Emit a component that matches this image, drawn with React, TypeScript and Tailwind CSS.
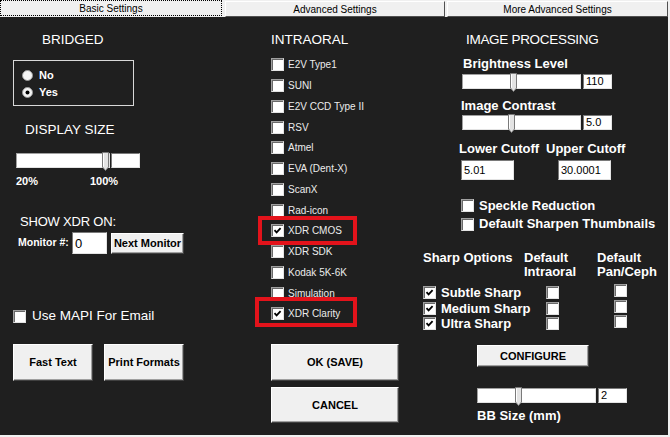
import React from 'react';

const sans = "font-['Liberation_Sans',Arial,sans-serif]";

function CheckBox({ checked = false }: { checked?: boolean }) {
  return (
    <span className="flex h-[13px] w-[13px] shrink-0 items-center justify-center border border-t-[#a0a0a0] border-l-[#a0a0a0] border-b-[#e3e3e3] border-r-[#e3e3e3] bg-white shadow-[inset_1px_1px_0_#696969]">
      {checked && (
        <svg width="9" height="9" viewBox="0 0 9 9">
          <path d="M1.5 4.2 L3.6 6.4 L7.6 2.2" stroke="#000" strokeWidth="1.8" fill="none" />
        </svg>
      )}
    </span>
  );
}

function Radio({ selected = false }: { selected?: boolean }) {
  return (
    <svg width="11" height="11" viewBox="0 0 11 11" className="shrink-0">
      <circle cx="5.5" cy="5.5" r="5" fill="#f4f4f4" stroke="#9a9a9a" strokeWidth="1" />
      {selected && <circle cx="5.5" cy="5.5" r="2" fill="#000" />}
    </svg>
  );
}

function Thumb({ className }: { className: string }) {
  return (
    <svg width="7" height="19" viewBox="0 0 7 19" className={`absolute top-[-2px] ${className}`}>
      <path d="M0.5 0.5 H6.5 V15 L3.5 18.5 L0.5 15 Z" fill="#e3e3e3" stroke="#7a7a7a" strokeWidth="1" />
      <path d="M1.5 1.5 V14.6" stroke="#ffffff" strokeWidth="1" />
    </svg>
  );
}

function Field({ value, className }: { value?: string; className: string }) {
  return (
    <div
      className={`flex items-center border border-t-[#7a7a7a] border-l-[#7a7a7a] border-b-[#e3e3e3] border-r-[#e3e3e3] bg-white pl-[2px] text-[11px] leading-none text-black ${className}`}
    >
      {value}
    </div>
  );
}

function Slider({ track, thumb, value }: { track: string; thumb: string; value?: string }) {
  return (
    <div className="flex items-start gap-[2px]">
      <div
        className={`relative h-[15px] border border-t-[#a0a0a0] border-l-[#a0a0a0] border-b-[#e3e3e3] border-r-[#e3e3e3] bg-white ${track}`}
      >
        <Thumb className={thumb} />
      </div>
      <Field value={value} className="h-[15px] w-[29px]" />
    </div>
  );
}

function Btn({ children, className }: { children: React.ReactNode; className: string }) {
  return (
    <button
      type="button"
      className={`flex items-center justify-center border border-t-white border-l-white border-b-[#404040] border-r-[#404040] bg-[#f0f0f0] text-[11px] font-bold text-black shadow-[inset_-1px_-1px_0_#a0a0a0] ${className}`}
    >
      {children}
    </button>
  );
}

const intraoral = [
  { label: 'E2V Type1' },
  { label: 'SUNI' },
  { label: 'E2V CCD Type II' },
  { label: 'RSV' },
  { label: 'Atmel' },
  { label: 'EVA (Dent-X)' },
  { label: 'ScanX' },
  { label: 'Rad-icon' },
  { label: 'XDR CMOS', checked: true, mark: 'cmos' },
  { label: 'XDR SDK' },
  { label: 'Kodak 5K-6K' },
  { label: 'Simulation' },
  { label: 'XDR Clarity', checked: true, mark: 'clarity' },
];

const sharp = ['Subtle Sharp', 'Medium Sharp', 'Ultra Sharp'];

export default function App() {
  return (
    <div className={`flex h-[437px] w-[670px] flex-col overflow-hidden bg-[#f0f0f0] ${sans}`}>
      {/* tabs */}
      <div className="flex h-[17px] text-[10px] text-black">
        <div className="flex h-[16px] w-[222px] items-center justify-center border border-dotted border-black">
          Basic Settings
        </div>
        <div className="ml-[3px] mt-[1px] flex h-[16px] w-[220px] items-center justify-center border border-t-white border-l-white border-b-[#505050] border-r-[#505050] pt-[1px]">
          Advanced Settings
        </div>
        <div className="ml-[2px] mt-[1px] flex h-[16px] w-[221px] items-center justify-center border border-t-white border-l-white border-b-[#505050] border-r-[#505050] pt-[1px]">
          More Advanced Settings
        </div>
      </div>

      <div className="grid h-[418px] w-[668px] grid-cols-[230px_180px_258px] bg-[#1f1f1f] text-white">
        {/* left column */}
        <div className="flex flex-col">
          <div className="ml-[42px] mt-[15px] text-[13.5px] leading-[16px]">BRIDGED</div>
          <div className="ml-[13px] mt-[12px] flex h-[46px] w-[121px] flex-col border border-[#d8d8d8] pl-[8px] pt-[6px]">
            <div className="flex h-[17px] items-center gap-[6px] text-[11px] font-bold">
              <Radio />
              No
            </div>
            <div className="flex h-[17px] items-center gap-[6px] text-[11px] font-bold">
              <Radio selected />
              Yes
            </div>
          </div>
          <div className="ml-[25px] mt-[16px] text-[13.5px] leading-[16px]">DISPLAY SIZE</div>
          <div className="ml-[16px] mt-[15px] flex items-start gap-[1px]">
            <div className="relative h-[15px] w-[94px] border border-t-[#a0a0a0] border-l-[#a0a0a0] border-b-[#e3e3e3] border-r-[#e3e3e3] bg-white">
              <Thumb className="left-[85px]" />
            </div>
            <Field className="h-[15px] w-[29px]" />
          </div>
          <div className="ml-[16px] mt-[6.5px] flex h-[12px] text-[11px] font-bold leading-[12px]">
            <span className="w-[74px]">20%</span>
            <span>100%</span>
          </div>
          <div className="ml-[20px] mt-[27.5px] text-[13px] leading-[16px] tracking-[-0.2px]">SHOW XDR ON:</div>
          <div className="ml-[18px] mt-[2px] flex h-[22px] items-center">
            <span className="w-[54px] text-[10.5px] font-bold">Monitor #:</span>
            <Field value="0" className="h-[22px] w-[35px] text-[13px]" />
            <Btn className="ml-[4px] h-[21px] w-[73px]">Next Monitor</Btn>
          </div>
          <div className="ml-[13px] mt-[54px] flex h-[16px] items-center gap-[6px] text-[13.5px]">
            <CheckBox />
            Use MAPI For Email
          </div>
          <div className="ml-[13px] mt-[20px] flex gap-[11px]">
            <Btn className="h-[37px] w-[80px]">Fast Text</Btn>
            <Btn className="h-[37px] w-[80px]">Print Formats</Btn>
          </div>
        </div>

        {/* middle column */}
        <div className="flex flex-col">
          <div className="ml-[41px] mt-[15px] text-[13.5px] leading-[16px]">INTRAORAL</div>
          <div className="ml-[41px] mt-[6.6px] flex flex-col">
            {intraoral.map((item) => (
              <div key={item.label} className="relative flex h-[20.75px] items-center gap-[4px] text-[10px] text-[#ececec]">
                <CheckBox checked={item.checked} />
                {item.label}
                {item.mark === 'cmos' && (
                  <span className="absolute left-[-13px] top-[-4.6px] h-[29px] w-[99px] border-[4px] border-[#e3131b]" />
                )}
                {item.mark === 'clarity' && (
                  <span className="absolute left-[-16px] top-[-6.6px] h-[30px] w-[102px] border-[4px] border-[#e3131b]" />
                )}
              </div>
            ))}
          </div>
          <Btn className="ml-[41px] mt-[19.6px] h-[37px] w-[128px]">OK (SAVE)</Btn>
          <Btn className="ml-[41px] mt-[6px] h-[36px] w-[128px]">CANCEL</Btn>
        </div>

        {/* right column */}
        <div className="flex flex-col">
          <div className="ml-[56px] mt-[15px] text-[13.5px] leading-[16px] tracking-[-0.3px]">IMAGE PROCESSING</div>
          <div className="ml-[53px] mt-[7.5px] text-[13px] font-bold leading-[15px]">Brightness Level</div>
          <div className="ml-[52px] mt-[3.5px]">
            <Slider track="w-[119px]" thumb="left-[47px]" value="110" />
          </div>
          <div className="ml-[51px] mt-[9px] text-[13px] font-bold leading-[15px]">Image Contrast</div>
          <div className="ml-[52px] mt-[2px]">
            <Slider track="w-[119px]" thumb="left-[45px]" value="5.0" />
          </div>
          <div className="ml-[49px] mt-[10.5px] flex text-[13px] font-bold leading-[15px]">
            <span className="w-[87px]">Lower Cutoff</span>
            <span>Upper Cutoff</span>
          </div>
          <div className="ml-[51px] mt-[4.5px] flex">
            <Field value="5.01" className="h-[20px] w-[53px]" />
            <Field value="30.0001" className="ml-[44px] h-[20px] w-[53px]" />
          </div>
          <div className="ml-[51px] mt-[17.5px] flex h-[16px] items-center gap-[5px] text-[13px] font-bold">
            <CheckBox />
            Speckle Reduction
          </div>
          <div className="ml-[51px] mt-[2.5px] flex h-[16px] items-center gap-[5px] text-[13px] font-bold">
            <CheckBox />
            Default Sharpen Thumbnails
          </div>
          <div className="ml-[13px] mt-[18.7px] grid grid-cols-[101px_73px_auto] text-[13px] font-bold leading-[14px]">
            <span>Sharp Options</span>
            <span>
              Default
              <br />
              Intraoral
            </span>
            <span>
              Default
              <br />
              Pan/Ceph
            </span>
          </div>
          <div className="ml-[13px] mt-[4.5px] flex flex-col">
            {sharp.map((s) => (
              <div key={s} className="grid h-[15.5px] grid-cols-[123px_68px_auto] items-center">
                <div className="flex items-center gap-[5px] text-[13px] font-bold">
                  <CheckBox checked />
                  {s}
                </div>
                <CheckBox />
                <div className="mb-[4px]">
                  <CheckBox />
                </div>
              </div>
            ))}
          </div>
          <Btn className="ml-[67px] mt-[15.25px] h-[22px] w-[112px]">CONFIGURE</Btn>
          <div className="ml-[67px] mt-[21px]">
            <Slider track="w-[119px]" thumb="left-[37px]" value="2" />
          </div>
          <div className="ml-[67px] mt-[5.5px] text-[13px] font-bold leading-[15px]">BB Size (mm)</div>
        </div>
      </div>
    </div>
  );
}
